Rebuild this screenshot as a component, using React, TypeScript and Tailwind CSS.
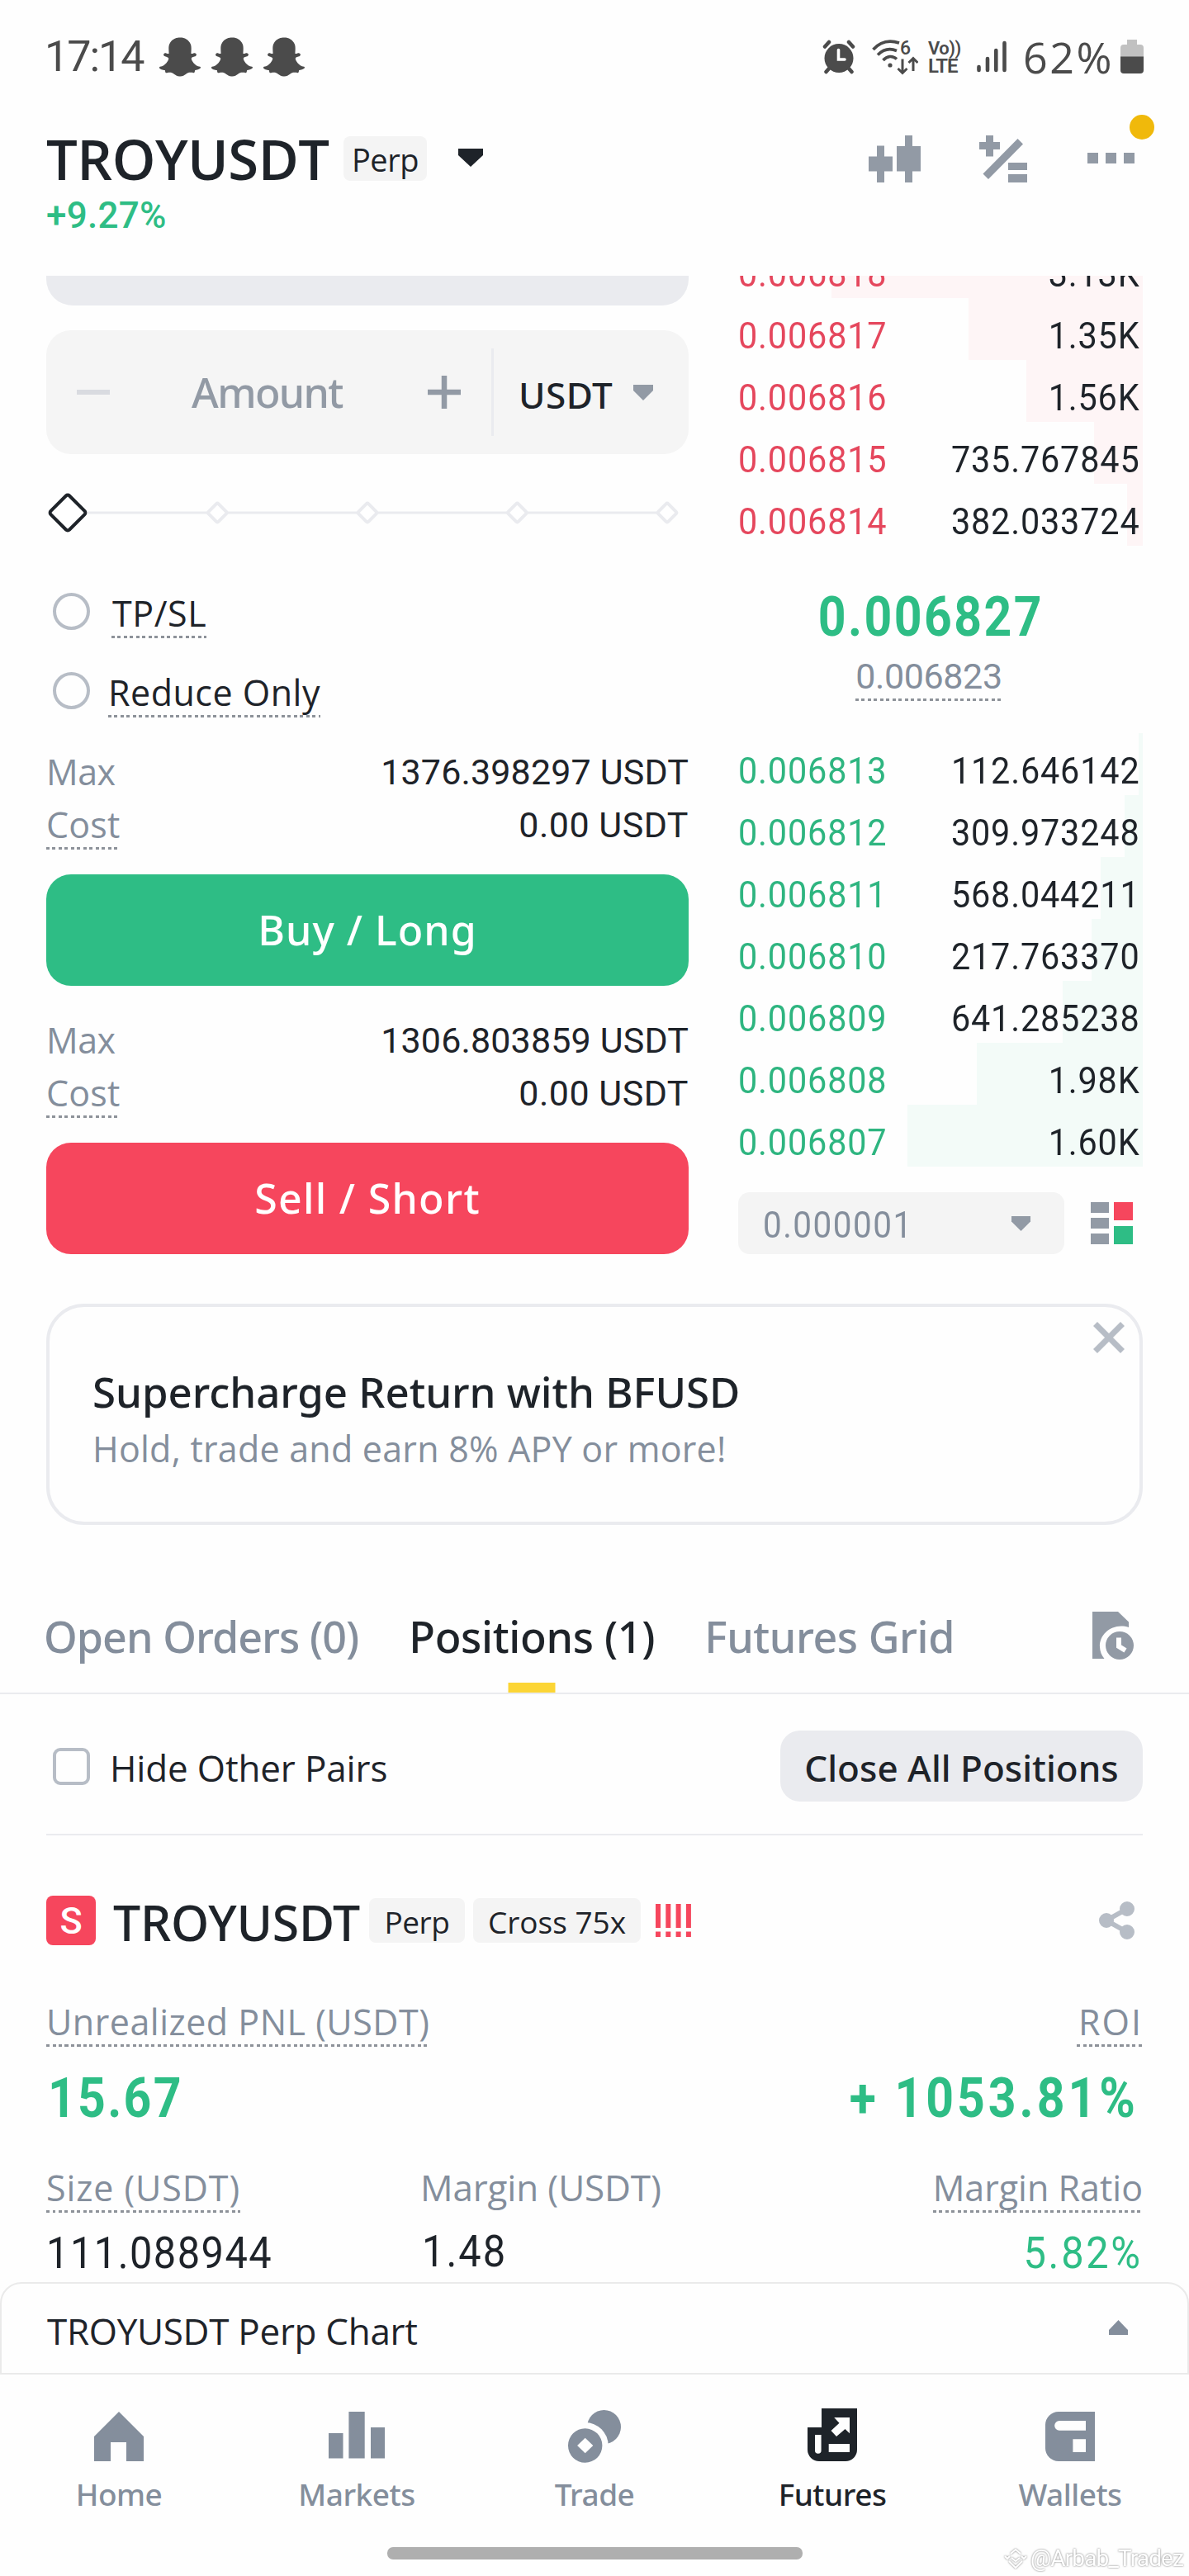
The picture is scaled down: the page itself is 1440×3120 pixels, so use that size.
import type { ReactNode } from "react";
import { FaSnapchatGhost } from "react-icons/fa";

const asks = [
  { price: "0.006818", amount: "3.13K", depth: 377 },
  { price: "0.006817", amount: "1.35K", depth: 211 },
  { price: "0.006816", amount: "1.56K", depth: 141 },
  { price: "0.006815", amount: "735.767845", depth: 59 },
  { price: "0.006814", amount: "382.033724", depth: 19 },
];

const bids = [
  { price: "0.006813", amount: "112.646142", depth: 5 },
  { price: "0.006812", amount: "309.973248", depth: 22 },
  { price: "0.006811", amount: "568.044211", depth: 51 },
  { price: "0.006810", amount: "217.763370", depth: 62 },
  { price: "0.006809", amount: "641.285238", depth: 97 },
  { price: "0.006808", amount: "1.98K", depth: 201 },
  { price: "0.006807", amount: "1.60K", depth: 285 },
];

function Dotted({ children, className = "" }: { children: ReactNode; className?: string }) {
  return (
    <span
      className={`inline-block whitespace-nowrap text-[43px] leading-[60px] bg-[repeating-linear-gradient(90deg,#8d9299_0_4px,transparent_4px_7.5px)] bg-[length:100%_3px] bg-bottom bg-no-repeat ${className}`}
    >
      {children}
    </span>
  );
}

function StatusBar() {
  return (
    <div className="flex h-[138px] items-center justify-between pl-[54px] pr-[55px] font-['Roboto',sans-serif] text-[#4b4b4b]">
      <div className="flex items-center">
        <span className="w-[139px] text-[52px] leading-none tracking-[-2px]">17:14</span>
        <div className="flex gap-[13px]">
          <FaSnapchatGhost size={50} />
          <FaSnapchatGhost size={50} />
          <FaSnapchatGhost size={50} />
        </div>
      </div>
      <div className="flex items-center">
        {/* Alarm */}
        <svg width="40" height="42" viewBox="0 0 40 42" fill="currentColor">
          <circle cx="20" cy="22.5" r="17.5" />
          <path d="M3 8.5 8 3M37 8.5 32 3M8 35l-3.5 4M32 35l3.5 4" stroke="currentColor" strokeWidth="4.5" strokeLinecap="round" />
          <path d="M19.5 12.5v11.5h7.5" stroke="#fff" strokeWidth="3.6" fill="none" strokeLinecap="round" />
        </svg>
        {/* Wi-Fi 6 */}
        <svg className="ml-5" width="56" height="44" viewBox="0 0 56 44" fill="none" stroke="currentColor" strokeWidth="3.6">
          <path d="M1.5 13C10 3.5 21 1 33 5" />
          <path d="M7 19.5C14 12.5 22 11 30 14.5" />
          <path d="M13.5 26C18.5 20.5 25 20 30 24.5" />
          <circle cx="22" cy="32" r="2.6" fill="currentColor" stroke="none" />
          <path d="M37 24.5v16M31.5 36l5.5 5.5 5.5-5.5M50 39V24M44.5 29l5.5-5.5 5.5 5.5" strokeWidth="3" />
          <text x="34" y="19" fontSize="23" fontWeight="500" fill="currentColor" stroke="none" fontFamily="Roboto, sans-serif">
            6
          </text>
        </svg>
        {/* VoLTE */}
        <div className="ml-3 flex w-[43px] flex-col font-semibold">
          <span className="whitespace-nowrap text-[22px] leading-[21px] tracking-[-0.5px]">Vo))</span>
          <span className="text-[24px] leading-[22px] tracking-[-1px]">LTE</span>
        </div>
        <svg className="ml-4" width="36" height="40" viewBox="0 0 36 40" stroke="currentColor" strokeWidth="4.6" strokeLinecap="round">
          <path d="M2.5 32v4M13 22v14M23.3 12v24M33.5 3v33" />
        </svg>
        <span className="ml-[20px] w-[116px] whitespace-nowrap font-['Open_Sans',sans-serif] text-[52px] leading-none tracking-[2.5px]">62%</span>
        <svg className="ml-[2px]" width="28" height="42" viewBox="0 0 28 42">
          <path d="M8 0h12v6h4a4 4 0 0 1 4 4v11H0V10a4 4 0 0 1 4-4h4z" fill="#c1c1c1" />
          <path d="M0 20.5h28V37a4 4 0 0 1-4 4H4a4 4 0 0 1-4-4z" fill="#4b4b4b" />
        </svg>
      </div>
    </div>
  );
}

function Header() {
  return (
    <div className="relative h-[196px] px-14">
      <div className="flex h-[111px] items-center justify-between">
        <div className="flex items-center">
          <h1 className="w-[360px] whitespace-nowrap pb-[2px] text-[67px] font-semibold leading-none tracking-[-0.5px]">TROYUSDT</h1>
          <span className="mb-[3px] flex h-[54px] w-[101px] items-center justify-center rounded-lg bg-[#f4f4f4] pt-[2px] text-[38px] leading-none tracking-[-0.5px]">
            Perp
          </span>
          <svg className="ml-[38px] mb-[5px]" width="30" height="22" viewBox="0 0 30 22" fill="#1e2329">
            <path d="M0 0h30v8L15 22 0 8z" />
          </svg>
        </div>
        <div className="mb-[4px] flex pr-[10px] text-[#929aa5]">
          <svg width="63" height="58" viewBox="0 0 63 58" fill="currentColor">
            <path d="M10 13.5h9v13h10v18H19V58h-9V44.5H0v-18h10zM44 1h9v13h10v30.5H53V58h-9V44.5H34V14h10z" />
          </svg>
          <svg className="ml-[71px]" width="58" height="58" viewBox="0 0 58 58" fill="currentColor">
            <path d="M8 1h9v8h8v9h-8v8.5H8V18H0V9h8zM46.5 5l6.5 6.5L11 54l-6.5-6.5zM35 34h23v9H35zM35 48h23v10H35z" />
          </svg>
          <svg className="ml-[73px] mt-[22px]" width="57" height="14" viewBox="0 0 57 14" fill="currentColor">
            <path d="M0 0h13v13H0zM22 0h13v13H22zM44 0h13v13H44z" />
          </svg>
        </div>
      </div>
      <p className="pt-[1px] font-['Roboto',sans-serif] text-[44px] font-medium leading-[23px] tracking-[0.26px] text-[#2ebd85]">+9.27%</p>
      <span className="absolute right-[42px] top-[1px] h-[30px] w-[30px] rounded-full bg-[#f0b90b]" />
    </div>
  );
}

function CostBlock({ max }: { max: string }) {
  return (
    <>
      <div className="mt-[51px] flex h-[30px] items-center justify-between text-[43px]">
        <span className="tracking-[-0.5px] text-[#848e9c]">Max</span>
        <span className="font-['Roboto',sans-serif] tracking-[0.15px]">{max} USDT</span>
      </div>
      <div className="mt-[19px] flex h-[60px] items-center justify-between text-[43px]">
        <Dotted className="tracking-[0.2px] text-[#848e9c]">Cost</Dotted>
        <span className="font-['Roboto',sans-serif] tracking-[0.5px]">0.00 USDT</span>
      </div>
    </>
  );
}

function OrderForm() {
  return (
    <div className="w-[778px]">
      <div className="h-9 rounded-b-[32px] bg-[#eaebef]" />
      <div className="mt-[30px] flex h-[150px] items-center rounded-[30px] bg-[#f5f5f5]">
        <span className="ml-[37px] h-[6px] w-[40px] bg-[#d9dbe0]" />
        <span className="ml-[99px] w-[286px] font-['Noto_Sans',sans-serif] text-[50px] font-medium leading-none tracking-[-1.6px] text-[#929aa5]">
          Amount
        </span>
        <svg width="40" height="40" viewBox="0 0 40 40" stroke="#929aa5" strokeWidth="6.5">
          <path d="M0 20h40M20 0v40" />
        </svg>
        <span className="ml-[37px] h-[106px] w-[3px] bg-[#eaebef]" />
        <span className="ml-[30px] w-[139px] pt-[5px] font-['Noto_Sans',sans-serif] text-[44px] font-medium leading-none tracking-[0.5px]">
          USDT
        </span>
        <svg width="24" height="19" viewBox="0 0 24 19" fill="#929aa5">
          <path d="M0 0h24v7L12 19 0 7z" />
        </svg>
      </div>

      {/* Amount slider */}
      <svg className="mt-[46px] block" width="778" height="50" viewBox="0 0 778 50" fill="#fff" stroke="#eaebef" strokeWidth="4" strokeLinejoin="round">
        <path d="M50 25h690" strokeWidth="3" />
        {[207.3, 389, 570.4, 752].map((x) => (
          <rect key={x} x={x - 8.5} y="16.5" width="17" height="17" rx="2" transform={`rotate(45 ${x} 25)`} />
        ))}
        <rect x="10" y="9" width="32" height="32" rx="3" transform="rotate(45 26 25)" stroke="#1e2329" />
      </svg>

      <div className="mt-[67px] flex h-[60px] items-center pl-2">
        <span className="mb-[6px] h-[45px] w-[45px] rounded-full border-4 border-[#b7bdc6]" />
        <Dotted className="ml-[26px] pl-[1px] tracking-[0.6px]">TP/SL</Dotted>
      </div>
      <div className="mt-9 flex h-[60px] items-center pl-2">
        <span className="mb-[6px] h-[45px] w-[45px] rounded-full border-4 border-[#b7bdc6]" />
        <Dotted className="ml-[22px] tracking-[0.5px]">Reduce Only</Dotted>
      </div>

      <CostBlock max="1376.398297" />
      <button className="mt-[30px] block h-[135px] w-full rounded-[30px] bg-[#2ebd85] font-['Noto_Sans',sans-serif] text-[50px] font-medium tracking-[1px] text-white">
        Buy / Long
      </button>
      <CostBlock max="1306.803859" />
      <button className="mt-[30px] block h-[135px] w-full rounded-[30px] bg-[#f6465d] font-['Noto_Sans',sans-serif] text-[50px] font-medium tracking-[1.3px] text-white">
        Sell / Short
      </button>
    </div>
  );
}

function BookRow({ price, amount, depth, side }: { price: string; amount: string; depth: number; side: "ask" | "bid" }) {
  return (
    <div className="relative flex h-[75px] shrink-0 items-center justify-between pr-[4px] pt-4 font-['Roboto',sans-serif] text-[45px] leading-none tracking-[0.9px]">
      <span className={`absolute right-0 top-0 h-full ${side === "ask" ? "bg-[#fef5f6]" : "bg-[#f3fbf8]"}`} style={{ width: depth }} />
      <span className={`relative origin-left scale-x-[0.92] ${side === "ask" ? "text-[#e5475d]" : "text-[#2eb580]"}`}>{price}</span>
      <span className="relative origin-right scale-x-[0.92]">{amount}</span>
    </div>
  );
}

function OrderBook() {
  return (
    <div className="w-[490px]">
      <div className="flex h-[327px] flex-col justify-end overflow-hidden">
        {asks.map((row) => (
          <BookRow key={row.price} {...row} side="ask" />
        ))}
      </div>
      <div className="flex h-[227px] flex-col items-center pr-[28px] pt-14 font-['Roboto',sans-serif]">
        <span className="ml-[5px] scale-x-[0.88] text-[67px] font-bold leading-[60px] tracking-[2.75px] text-[#2ebd85]">0.006827</span>
        <Dotted className="mt-3 tracking-[-0.4px] text-[#848e9c]">0.006823</Dotted>
      </div>
      <div>
        {bids.map((row) => (
          <BookRow key={row.price} {...row} side="bid" />
        ))}
      </div>
      <div className="mt-[31px] flex h-[75px] items-center">
        <div className="flex h-full w-[395px] items-center justify-between rounded-[14px] bg-[#f4f4f4] pl-[30px] pr-[41px]">
          <span className="origin-left scale-x-[0.92] pt-[4px] font-['Roboto',sans-serif] text-[44px] leading-none tracking-[1.6px] text-[#848e9c]">
            0.000001
          </span>
          <svg width="23" height="18" viewBox="0 0 23 18" fill="#929aa5">
            <path d="M0 0h23v6.5L11.5 18 0 6.5z" />
          </svg>
        </div>
        <svg className="ml-8" width="51" height="51" viewBox="0 0 51 51">
          <path d="M0 0h22v13H0zM0 19h22v13H0zM0 38h22v13H0z" fill="#929aa5" />
          <path d="M28 0h23v22H28z" fill="#f6465d" />
          <path d="M28 29h23v22H28z" fill="#2ebd85" />
        </svg>
      </div>
    </div>
  );
}

function PromoCard() {
  return (
    <div className="relative mx-14 mt-[60px] h-[268px] rounded-[46px] border-4 border-[#eaebef] pl-[52px] pt-[73px]">
      <h2 className="font-['Noto_Sans',sans-serif] text-[51px] font-medium leading-[58px] tracking-[-0.05px]">Supercharge Return with BFUSD</h2>
      <p className="mt-[11px] text-[43px] leading-[60px] tracking-[0.23px] text-[#848e9c]">Hold, trade and earn 8% APY or more!</p>
      <svg className="absolute right-[18px] top-[18px]" width="38" height="38" viewBox="0 0 38 38" stroke="#b7bdc6" strokeWidth="7">
        <path d="M2.5 2.5l33 33M35.5 2.5l-33 33" />
      </svg>
    </div>
  );
}

function Tabs() {
  return (
    <div className="mt-[73px] flex h-[132px] items-start border-b-2 border-[#eaebef] pl-[53px] pr-[67px] font-['Noto_Sans',sans-serif] text-[52px] font-medium leading-[124px] text-[#848e9c]">
      <span className="tracking-[-0.97px]">Open Orders (0)</span>
      <span className="relative ml-[61px] tracking-[-0.32px] text-[#1e2329]">
        Positions (1)
        <i className="absolute bottom-[-6px] left-1/2 h-[12px] w-[57px] -translate-x-1/2 bg-[#fcd535]" />
      </span>
      <span className="ml-[60px] tracking-[-0.46px]">Futures Grid</span>
      <svg className="ml-auto mt-[32px]" width="50" height="58" viewBox="0 0 50 58">
        <path d="M0 0h31l13 12.5v6.5C26 13 8 26 9 43c.3 5 2 10 5.5 14H0z" fill="#929aa5" />
        <circle cx="33" cy="41" r="17" fill="#929aa5" />
        <path d="M32 31.5v10.5l8 5" stroke="#fff" strokeWidth="6" fill="none" />
      </svg>
    </div>
  );
}

function Position() {
  return (
    <div className="px-14">
      <div className="flex h-[171px] items-center border-b-2 border-[#eaebef] pt-[5px]">
        <span className="ml-2 h-[45px] w-[45px] rounded-[9px] border-4 border-[#b7bdc6]" />
        <span className="ml-[24px] pt-[3px] text-[44px] leading-none tracking-[-0.15px]">Hide Other Pairs</span>
        <button className="ml-auto h-[86px] w-[439px] rounded-[24px] bg-[#eaebef] pt-[3px] font-['Noto_Sans',sans-serif] text-[44px] font-medium leading-none">
          Close All Positions
        </button>
      </div>

      <div className="mt-[72px] flex h-[62px] items-center">
        <span className="flex h-[60px] w-[60px] items-center justify-center rounded-lg bg-[#f6465d] font-['Roboto',sans-serif] text-[45px] font-medium leading-none text-white">
          S
        </span>
        <h2 className="ml-[21px] w-[310px] whitespace-nowrap pt-[4px] font-['Noto_Sans',sans-serif] text-[59px] font-medium leading-none tracking-[-0.27px]">
          TROYUSDT
        </h2>
        <span className="flex h-[54px] w-[116px] items-center justify-center rounded-lg bg-[#f4f4f4] pt-[3px] text-[37px] leading-none tracking-[-0.4px]">Perp</span>
        <span className="ml-[10px] flex h-[54px] w-[203px] items-center justify-center rounded-lg bg-[#f4f4f4] pt-[3px] text-[37px] leading-none">
          Cross 75x
        </span>
        <svg className="ml-[18px]" width="43" height="40" viewBox="0 0 43 40" stroke="#f6465d" strokeWidth="6">
          <path d="M3 0v29M15.3 0v29M27.6 0v29M39.9 0v29M3 33.5v6.5M15.3 33.5v6.5M27.6 33.5v6.5M39.9 33.5v6.5" />
        </svg>
        <svg className="ml-auto mr-[10px]" width="43" height="46" viewBox="0 0 43 46" fill="#b7bdc6" stroke="#b7bdc6" strokeWidth="6">
          <path d="M34 9 9 23l25 14" fill="none" />
          <circle cx="34" cy="9" r="6" />
          <circle cx="9" cy="23" r="6" />
          <circle cx="34" cy="37" r="6" />
        </svg>
      </div>

      <div className="mt-[62px] flex justify-between text-[#848e9c]">
        <Dotted className="tracking-[0.5px]">Unrealized PNL (USDT)</Dotted>
        <Dotted className="pl-[2px] tracking-[2px]">ROI</Dotted>
      </div>
      <div className="mt-8 flex justify-between pl-[2px] pr-[5px] font-['Roboto',sans-serif] text-[67px] font-bold leading-[60px] text-[#2ebd85]">
        <span className="origin-left scale-x-[0.88] tracking-[2.6px]">15.67</span>
        <span className="origin-right scale-x-[0.88] tracking-[4.5px]">+ 1053.81%</span>
      </div>

      <div className="mt-[49px] flex text-[#848e9c]">
        <div className="w-[453px]">
          <Dotted className="tracking-[0.9px]">Size (USDT)</Dotted>
        </div>
        <span className="-mt-[1px] text-[44px] leading-[60px] tracking-[-0.15px]">Margin (USDT)</span>
        <Dotted className="ml-auto">Margin Ratio</Dotted>
      </div>
      <div className="mt-[19px] flex font-['Roboto',sans-serif] text-[53px] leading-[60px]">
        <div className="w-[455px]">
          <span className="inline-block origin-left scale-x-[0.92] tracking-[1.6px]">111.088944</span>
        </div>
        <span className="-mt-[2px] origin-left scale-x-[0.92] tracking-[2.2px]">1.48</span>
        <span className="ml-auto origin-right scale-x-[0.92] tracking-[2.9px] text-[#2ebd85]">5.82%</span>
      </div>
    </div>
  );
}

const navItems = [
  {
    label: "Home",
    icon: <path d="M36 6l30 30v30H45V43H26v23H6V36z" />,
  },
  {
    label: "Markets",
    icon: <path d="M2 32h17.5v30.5H2zM26.4 6h19.3v56.5H26.4zM53 25h17v37.5H53z" />,
  },
  {
    label: "Trade",
    icon: (
      <>
        <circle cx="47.5" cy="24.5" r="20.5" />
        <circle cx="24.7" cy="47" r="28" fill="#fefefe" />
        <path d="M24.7 26.3a20.7 20.7 0 1 0 0 41.4 20.7 20.7 0 0 0 0-41.4zm0 11.4 9.6 9.3-9.6 9.3-9.6-9.3z" />
      </>
    ),
  },
  {
    label: "Futures",
    active: true,
    icon: (
      <>
        <path d="M23 2h43v50a14 14 0 0 1-14 14H20A14 14 0 0 1 6 52V25h17z" />
        <path d="M15 34h7.6v19a3.8 3.8 0 0 1-7.6 0zM31.7 45H57v10H31.7zM38.2 13H57v19.3L51.5 27 41 36l-6.5-7 10-9.3z" fill="#fefefe" />
      </>
    ),
  },
  {
    label: "Wallets",
    icon: (
      <>
        <path d="M22 6h44v60H22A16 16 0 0 1 6 50V22A16 16 0 0 1 22 6z" />
        <path d="M23 17h32v11.7H23a5.85 5.85 0 0 1 0-11.7zM39.4 39.3H55V55H39.4z" fill="#fefefe" />
      </>
    ),
  },
];

function BottomNav() {
  return (
    <div className="relative h-[244px]">
      <div className="grid grid-cols-5 pt-[39px]">
        {navItems.map((item) => (
          <div key={item.label} className={`flex flex-col items-center ${item.active ? "text-[#1e2329]" : "text-[#848e9c]"}`}>
            <svg width="72" height="72" viewBox="0 0 72 72" fill="currentColor">
              {item.icon}
            </svg>
            <span className="mt-[12px] font-['Noto_Sans',sans-serif] text-[37px] font-medium leading-[44px] tracking-[-0.5px]">{item.label}</span>
          </div>
        ))}
      </div>
      <div className="mx-auto mt-[42px] h-[15px] w-[503px] rounded-[7px] bg-[#afafaf]" />
      {/* Watermark */}
      <div className="absolute bottom-[6px] right-[7px] flex items-center text-white [filter:drop-shadow(0_0_1px_#777)]">
        <svg width="28" height="24" viewBox="0 0 28 24" fill="none" stroke="currentColor" strokeWidth="2">
          <path d="M8 6l6-5 6 5M1 9l3 3 3-3M21 9l3 3 3-3M9 11l5 4 5-4M6 15l8 8 8-8" />
        </svg>
        <span className="ml-[4px] font-['Roboto',sans-serif] text-[28px] leading-[30px] tracking-[-0.9px]">@Arbab_Tradez</span>
      </div>
    </div>
  );
}

export default function App() {
  return (
    <div className="h-[3120px] w-[1440px] overflow-hidden bg-[#fefefe] font-['Open_Sans',sans-serif] text-[#1e2329]">
      <StatusBar />
      <Header />
      <div className="flex gap-[60px] px-14">
        <OrderForm />
        <OrderBook />
      </div>
      <PromoCard />
      <Tabs />
      <Position />
      <div className="mt-[5px] flex h-[112px] items-center justify-between rounded-t-[26px] border-2 border-[#eaeaea] pl-[55px] pr-[72px] pt-[5px]">
        <span className="text-[44px] leading-none tracking-[-0.3px]">TROYUSDT Perp Chart</span>
        <svg className="mb-[7px]" width="23" height="18" viewBox="0 0 23 18" fill="#848e9c">
          <path d="M11.5 0 23 12v6H0v-6z" />
        </svg>
      </div>
      <BottomNav />
    </div>
  );
}
